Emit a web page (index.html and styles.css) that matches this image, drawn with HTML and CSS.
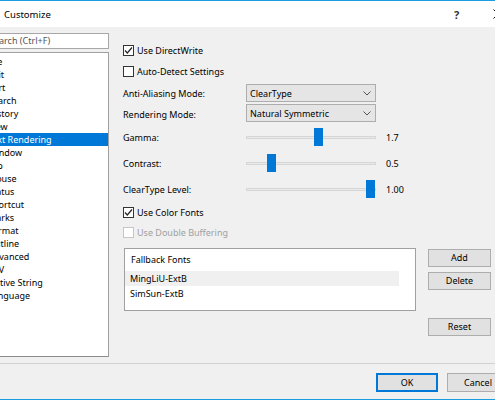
FILE: index.html
```html
<!DOCTYPE html>
<html>
<head>
<meta charset="utf-8">
<title>Customize</title>
<link rel="stylesheet" href="styles.css">
</head>
<body>
<div class="window">
  <div class="titlebar">
    <span class="title">Customize</span>
    <span class="cap-btn help">?</span>
    <span class="cap-btn close">
      <svg width="10" height="10" viewBox="0 0 10 10"><path d="M0.5 0.5L9.5 9.5M9.5 0.5L0.5 9.5" stroke="#111" stroke-width="1" fill="none"/></svg>
    </span>
  </div>
  <div class="main">
    <div class="left">
      <div class="search">Search (Ctrl+F)</div>
      <ul class="tree">
        <li>File</li>
        <li>Edit</li>
        <li>Sort</li>
        <li>Search</li>
        <li>History</li>
        <li>View</li>
        <li class="selected">Text Rendering</li>
        <li>Window</li>
        <li>Tab</li>
        <li>Mouse</li>
        <li>Status</li>
        <li>Shortcut</li>
        <li>Marks</li>
        <li>Format</li>
        <li>Outline</li>
        <li>Advanced</li>
        <li>CSV</li>
        <li>Native String</li>
        <li>Language</li>
      </ul>
    </div>
    <div class="right">
      <div class="check-row r-dw">
        <span class="box"><svg width="11" height="11" viewBox="0 0 11 11"><path d="M2 5.5L4.3 8L9 2.5" stroke="#222" stroke-width="1.2" fill="none"/></svg></span>
        <span>Use DirectWrite</span>
      </div>
      <div class="check-row r-auto">
        <span class="box"></span>
        <span>Auto-Detect Settings</span>
      </div>
      <div class="row r-combo1">
        <span class="label">Anti-Aliasing Mode:</span>
        <div class="combo"><span>ClearType</span><svg class="chev" width="8" height="5" viewBox="0 0 8 5"><path d="M0.5 0.5L4 4L7.5 0.5" stroke="#555" stroke-width="1" fill="none"/></svg></div>
      </div>
      <div class="row r-combo2">
        <span class="label lbl-low">Rendering Mode:</span>
        <div class="combo"><span>Natural Symmetric</span><svg class="chev" width="8" height="5" viewBox="0 0 8 5"><path d="M0.5 0.5L4 4L7.5 0.5" stroke="#555" stroke-width="1" fill="none"/></svg></div>
      </div>
      <div class="row r-slider r-gamma">
        <span class="label">Gamma:</span>
        <div class="slider"><div class="track"></div><div class="thumb" style="left:68px"></div></div>
        <span class="value">1.7</span>
      </div>
      <div class="row r-slider">
        <span class="label">Contrast:</span>
        <div class="slider"><div class="track"></div><div class="thumb" style="left:21px"></div></div>
        <span class="value">0.5</span>
      </div>
      <div class="row r-slider">
        <span class="label">ClearType Level:</span>
        <div class="slider"><div class="track"></div><div class="thumb" style="left:120px"></div></div>
        <span class="value">1.00</span>
      </div>
      <div class="check-row r-color">
        <span class="box"><svg width="11" height="11" viewBox="0 0 11 11"><path d="M2 5.5L4.3 8L9 2.5" stroke="#222" stroke-width="1.2" fill="none"/></svg></span>
        <span>Use Color Fonts</span>
      </div>
      <div class="check-row r-double disabled">
        <span class="box"></span>
        <span>Use Double Buffering</span>
      </div>
      <div class="fallback">
        <div class="listview">
          <div class="lv-header">Fallback Fonts</div>
          <div class="lv-item sel">MingLiU-ExtB</div>
          <div class="lv-item">SimSun-ExtB</div>
        </div>
        <div class="side-btns">
          <button class="btn">Add</button>
          <button class="btn">Delete</button>
          <button class="btn reset">Reset</button>
        </div>
      </div>
    </div>
  </div>
  <div class="footer">
    <button class="btn fbtn default">OK</button>
    <button class="btn fbtn">Cancel</button>
  </div>
</div>
</body>
</html>
```

FILE: styles.css
```css
html, body {
  margin: 0;
  padding: 0;
  width: 495px;
  height: 400px;
  overflow: hidden;
  background: #f0f0f0;
}
body {
  font-family: "Noto Sans", "Open Sans", sans-serif;
  font-size: 9px;
  color: #000;
}
.window {
  margin-left: -20px;
  width: 540px;
  height: 400px;
  box-sizing: border-box;
  border-top: 1px solid #1a9de1;
  border-bottom: 1px solid #1a9de1;
  background: #f0f0f0;
  display: flex;
  flex-direction: column;
}
.titlebar {
  height: 26px;
  background: #fff;
  display: flex;
  align-items: center;
  padding-left: 24px;
  padding-right: 2px;
}
.title {
  font-size: 9.5px;
  color: #000;
}
.cap-btn {
  width: 41px;
  height: 26px;
  display: flex;
  align-items: center;
  justify-content: center;
  color: #222;
}
.help {
  margin-left: auto;
  font-size: 11px;
  font-weight: bold;
  color: #333;
}
.main {
  flex: 1;
  display: flex;
  padding-top: 6px;
}
.left {
  margin-left: 4px;
  width: 125px;
  display: flex;
  flex-direction: column;
  gap: 3px;
}
.search {
  height: 16px;
  box-sizing: border-box;
  border: 1px solid #a7a7a7;
  background: #fff;
  color: #555;
  padding-left: 4px;
  line-height: 14px;
}
.tree {
  list-style: none;
  margin: 0;
  padding: 2px 0 0 0;
  height: 305px;
  box-sizing: border-box;
  border: 1px solid #a0a0a0;
  border-bottom-color: #8c8c8c;
  background: #fff;
}
.tree li {
  height: 13px;
  line-height: 13px;
  padding-left: 3px;
  white-space: nowrap;
}
.tree li.selected {
  background: #0078d7;
  color: #fff;
}
.right {
  margin-left: 14px;
  width: 368px;
  display: flex;
  flex-direction: column;
}
.check-row {
  display: flex;
  align-items: center;
  height: 14px;
  gap: 3px;
}
.box {
  width: 11px;
  height: 11px;
  box-sizing: border-box;
  border: 1px solid #333;
  background: #fff;
  display: flex;
  align-items: center;
  justify-content: center;
}
.box svg {
  display: block;
  margin: -1px;
}
.disabled {
  color: #a0a0a0;
}
.disabled .box {
  border-color: #c6c6c6;
}
.r-dw { margin-top: 10px; }
.r-auto { margin-top: 7px; }
.row {
  display: flex;
  align-items: center;
}
.label {
  width: 123px;
  flex: none;
}
.lbl-low {
  padding-top: 3px;
}
.r-combo1 { margin-top: 6px; height: 18px; }
.r-combo2 { margin-top: 2px; height: 18px; }
.combo {
  width: 130px;
  height: 18px;
  box-sizing: border-box;
  border: 1px solid #adadad;
  background: #e5e5e5;
  display: flex;
  align-items: center;
  justify-content: space-between;
  padding: 0 4px 0 3px;
}
.chev {
  display: block;
}
.r-slider {
  height: 20px;
  margin-top: 6px;
}
.r-gamma { margin-top: 5px; }
.slider {
  position: relative;
  width: 130px;
  height: 20px;
  flex: none;
  display: flex;
  align-items: center;
}
.track {
  width: 100%;
  height: 3px;
  box-sizing: border-box;
  border: 1px solid #d6d6d6;
  background: #e7eaea;
}
.thumb {
  position: absolute;
  top: 1px;
  width: 9px;
  height: 18px;
  background: #0078d7;
}
.value {
  margin-left: 10px;
}
.r-color { margin-top: 6px; }
.r-double { margin-top: 6px; }
.fallback {
  display: flex;
  margin-top: 9px;
}
.listview {
  margin-left: 1px;
  width: 292px;
  height: 63px;
  box-sizing: border-box;
  border: 1px solid #a0a0a0;
  background: #fff;
  padding-right: 16px;
}
.lv-header {
  height: 22px;
  line-height: 22px;
  padding-left: 6px;
}
.lv-item {
  height: 15px;
  line-height: 15px;
  padding-left: 5px;
}
.lv-item.sel {
  background: #f0f0f0;
}
.side-btns {
  margin-left: 12px;
  display: flex;
  flex-direction: column;
}
.btn {
  font-family: "Noto Sans", "Open Sans", sans-serif;
  font-size: 9px;
  color: #000;
  width: 63px;
  height: 18px;
  box-sizing: border-box;
  border: 1px solid #adadad;
  background: #e1e1e1;
  padding: 0;
  margin: 0;
  line-height: 16px;
}
.side-btns .btn {
  margin-top: 5px;
}
.side-btns .btn:first-child {
  margin-top: 1px;
}
.side-btns .reset {
  margin-top: 28px;
}
.footer {
  height: 36px;
  box-sizing: border-box;
  border-top: 1px solid #d2d2d2;
  display: flex;
  justify-content: flex-end;
  align-items: flex-start;
  padding-top: 9px;
  padding-right: 11px;
  gap: 9px;
}
.fbtn {
  width: 62px;
  height: 19px;
}
.default {
  border: 1px solid #0078d7;
  box-shadow: inset 0 0 0 1px #0078d7;
}
```
